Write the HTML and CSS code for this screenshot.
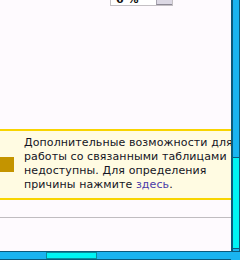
FILE: index.html
```html
<!DOCTYPE html>
<html lang="ru">
<head>
    <meta charset="UTF-8">
    <title>Свойства</title>
    <link rel="stylesheet" href="styles.css">
</head>
<body>
    <div class="window">
        <div class="panel">
            <div class="field-row">
                <span class="field-label">Масштаб, gqy</span>
                <div class="spin">
                    <span class="spin-value">6 %</span>
                    <span class="spin-btn"></span>
                </div>
            </div>

            <div class="notice">
                <span class="notice-icon"></span>
                <p class="notice-text">
                    Дополнительные возможности для работы со связанными таблицами недоступны. Для определения причины нажмите <a href="#">здесь</a>.
                </p>
            </div>

            <hr class="divider">
        </div>
        <div class="vscroll">
            <div class="vthumb"></div>
        </div>
        <div class="hscroll">
            <div class="hthumb"></div>
        </div>
        <div class="corner"></div>
    </div>
</body>
</html>
```

FILE: styles.css
```css
:root {
    --panel-bg: #fefafe;
    --track: #1ab4f0;
    --track-dark: #0b5a7c;
    --thumb: #00f4f4;
    --notice-bg: #fffbe2;
    --notice-border: #f8d400;
    --icon: #c49400;
    --text: #141424;
    --link: #4a3aa8;
}

body {
    margin: 0;
    font-family: "DejaVu Sans", sans-serif;
    font-size: 11px;
    color: var(--text);
    background: var(--track);
}

.window {
    display: grid;
    grid-template-columns: 231px 9px;
    grid-template-rows: 251px 9px;
    width: 240px;
    height: 260px;
}

.panel {
    background: var(--panel-bg);
    overflow: hidden;
    display: flex;
    flex-direction: column;
}

.field-row {
    display: flex;
    align-items: flex-end;
    height: 20px;
    margin-top: -14px;
    flex-shrink: 0;
}

.field-label {
    align-self: flex-start;
    width: 110px;
    color: #777;
    line-height: 14px;
}

.spin {
    display: flex;
    width: 61px;
    height: 18px;
    border: 1px solid #c4c0c4;
    background: #fff;
}

.spin-value {
    flex: 1;
    padding: 7px 0 0 5px;
    line-height: 12px;
    font-weight: bold;
    color: #111;
}

.spin-btn {
    width: 15px;
    background: #dcd8e4;
    border-left: 1px solid #a8a4b0;
    border-bottom: 1px solid #8c8894;
}

.notice {
    display: flex;
    align-items: center;
    gap: 10px;
    margin-top: 123px;
    padding: 5px 0 6px;
    background: var(--notice-bg);
    border-top: 2px solid var(--notice-border);
    border-bottom: 2px solid var(--notice-border);
    flex-shrink: 0;
}

.notice-icon {
    width: 14px;
    height: 15px;
    flex-shrink: 0;
    background: var(--icon);
}

.notice-text {
    margin: 0;
    width: 214px;
    flex-shrink: 0;
    line-height: 14px;
    letter-spacing: 0.1px;
}

.notice-text a {
    color: var(--link);
    text-decoration: none;
}

.divider {
    margin: 17px 0 0;
    border: none;
    border-top: 1px solid #c0bcc0;
}

.vscroll {
    background: var(--track);
    border-left: 2px solid var(--track-dark);
    border-right: 1px solid var(--track-dark);
    padding-top: 157px;
}

.vthumb {
    height: 90px;
    background: var(--thumb);
    border-top: 1px solid var(--track-dark);
    border-bottom: 1px solid var(--track-dark);
}

.hscroll {
    background: var(--track);
    border-top: 1px solid var(--track-dark);
    border-bottom: 1px solid var(--track-dark);
    padding-left: 46px;
}

.hthumb {
    width: 51px;
    height: 100%;
    box-sizing: border-box;
    background: var(--thumb);
    border: 1px solid #0a8c9c;
}

.corner {
    background: var(--track);
    border-top: 1px solid var(--track-dark);
}
```
